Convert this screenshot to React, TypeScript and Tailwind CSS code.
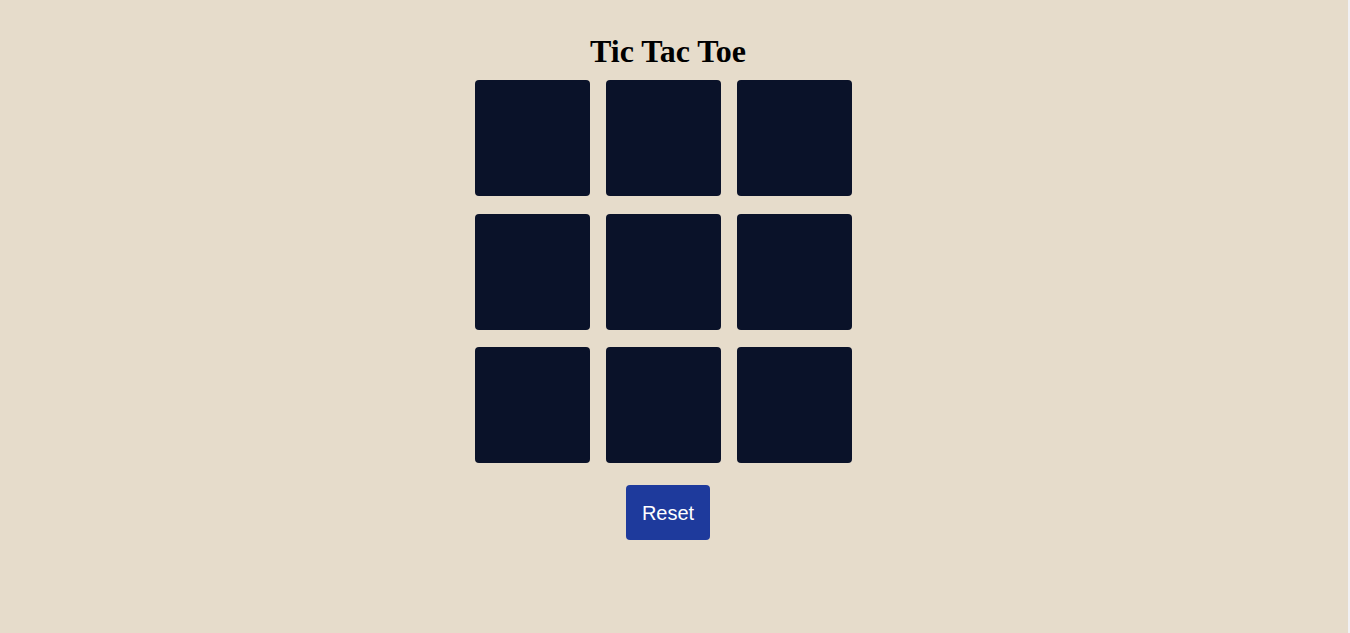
import { useState } from 'react'

export default function App() {
  const [board, setBoard] = useState<(string | null)[]>(Array(9).fill(null))
  const [xNext, setXNext] = useState(true)

  const play = (i: number) => {
    if (board[i]) return
    const next = board.slice()
    next[i] = xNext ? 'X' : 'O'
    setBoard(next)
    setXNext(!xNext)
  }

  return (
    <div className="flex min-h-[633px] w-full bg-[#e6dccb] font-['Liberation_Sans',Arial,sans-serif]">
      <div className="flex-1">
        <div className="flex w-[1336px] flex-col items-center pt-[33px]">
          <h1 className="mb-[10px] font-['Liberation_Serif','Times_New_Roman',serif] text-[32px] font-bold leading-[37px] text-black">
            Tic Tac Toe
          </h1>
          <div className="mr-[9px] grid grid-cols-[115.5px_115.5px_115.5px] gap-x-[15.5px] gap-y-[17.5px]">
            {board.map((v, i) => (
              <button
                key={i}
                onClick={() => play(i)}
                className="flex h-[116px] w-[115.5px] items-center justify-center rounded-[4px] bg-[#0a1229] text-5xl font-bold text-white"
              >
                {v}
              </button>
            ))}
          </div>
          <button
            onClick={() => {
              setBoard(Array(9).fill(null))
              setXNext(true)
            }}
            className="mt-[22px] h-[55px] w-[84px] rounded-[4px] bg-[#1e3a9c] text-[20px] text-white"
          >
            Reset
          </button>
        </div>
      </div>
      <div className="w-[2px] bg-[#f1f1f4]" />
    </div>
  )
}
